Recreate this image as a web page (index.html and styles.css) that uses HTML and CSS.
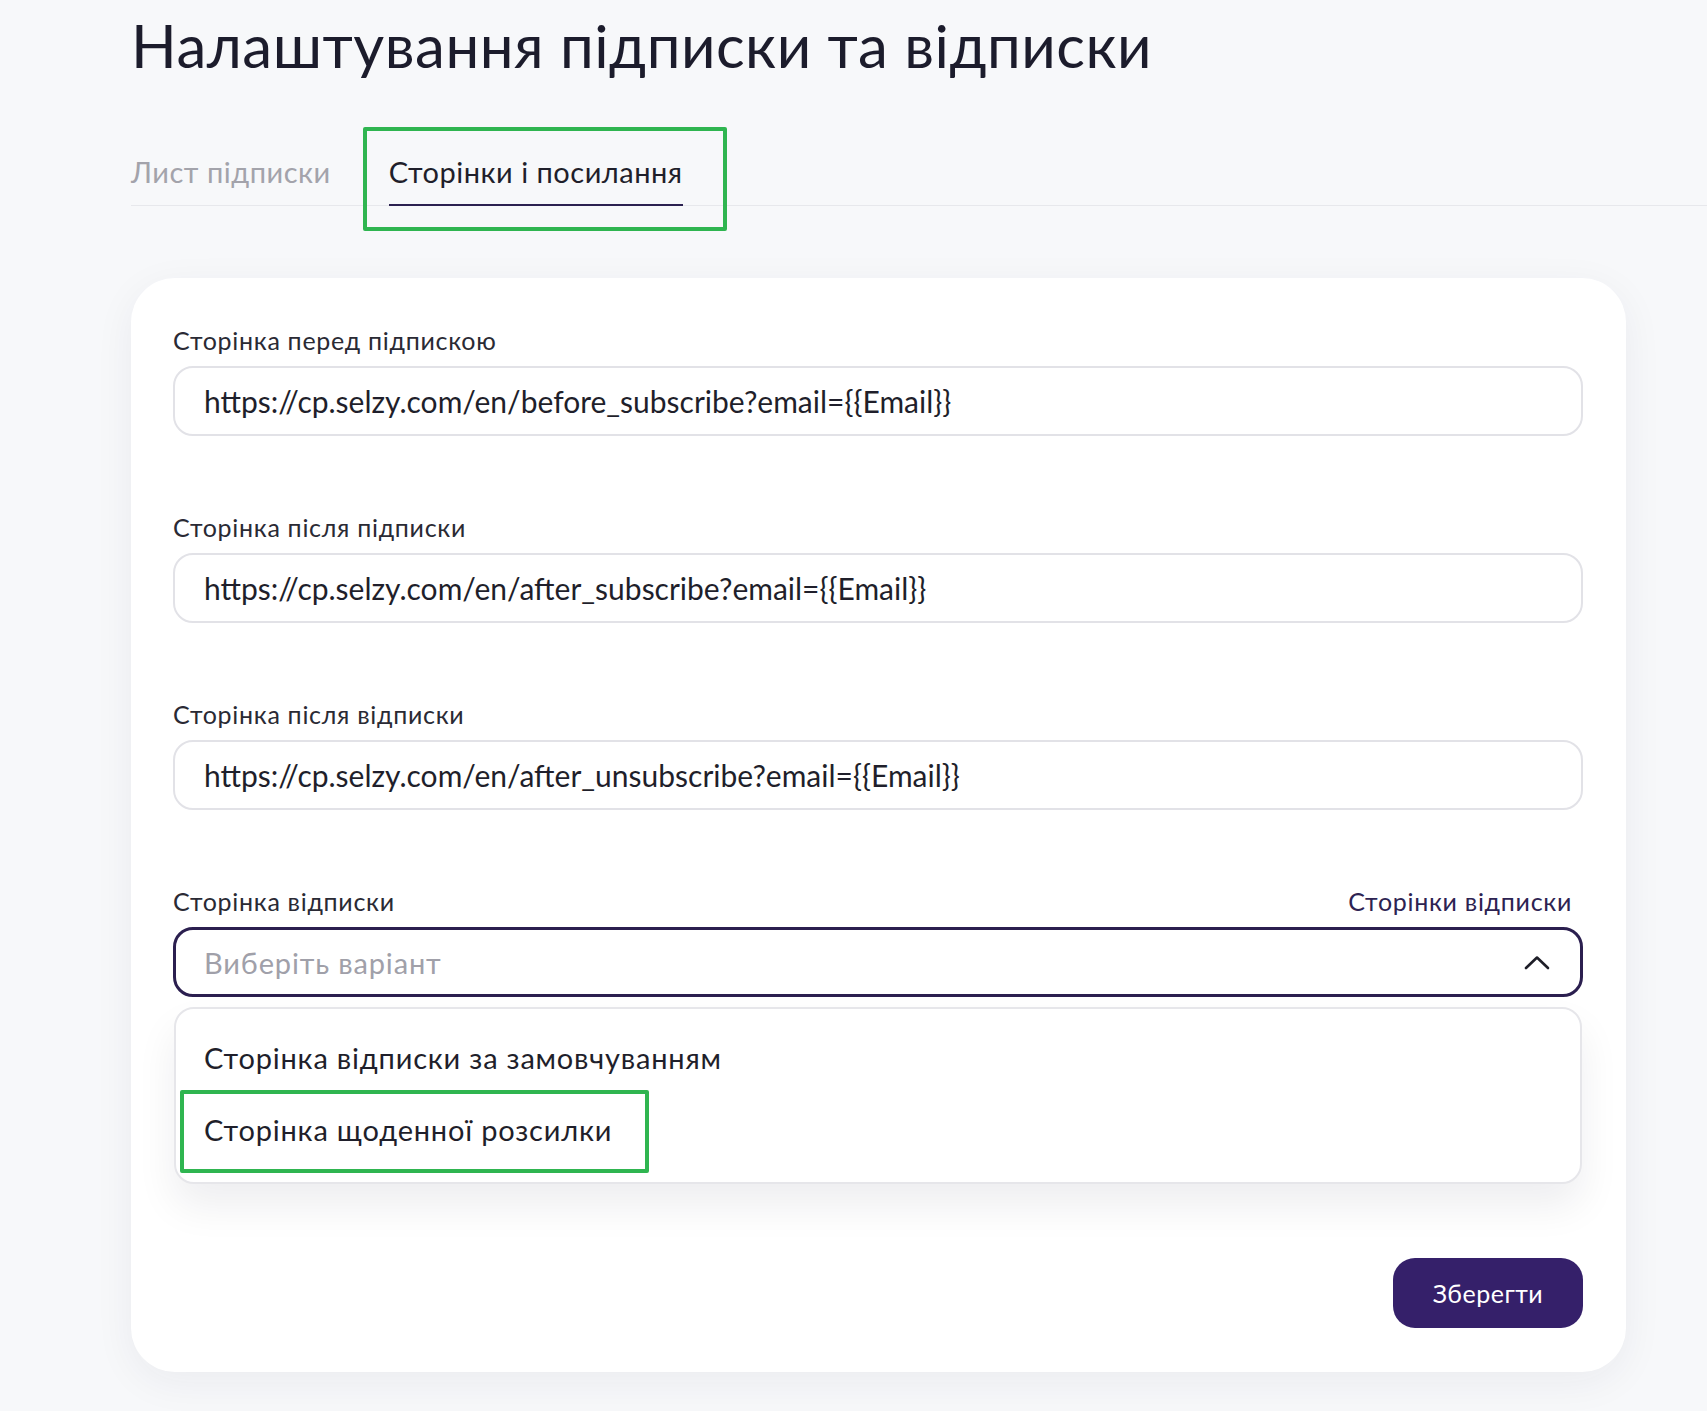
FILE: index.html
```html
<!DOCTYPE html>
<html lang="uk">
<head>
<meta charset="utf-8">
<title>Налаштування підписки та відписки</title>
<link rel="stylesheet" href="styles.css">
</head>
<body>
<div class="page">
  <h1 class="title">Налаштування підписки та відписки</h1>
  <div class="tabs">
    <div class="tab">Лист підписки</div>
    <div class="tab tab-active">Сторінки і посилання<span class="mark mark-tab"></span></div>
  </div>
  <div class="card">
    <div class="fields">
      <div class="field">
        <div class="label-row"><span class="label">Сторінка перед підпискою</span></div>
        <div class="input">https://cp.selzy.com/en/before_subscribe?email={{Email}}</div>
      </div>
      <div class="field">
        <div class="label-row"><span class="label">Сторінка після підписки</span></div>
        <div class="input">https://cp.selzy.com/en/after_subscribe?email={{Email}}</div>
      </div>
      <div class="field">
        <div class="label-row"><span class="label">Сторінка після відписки</span></div>
        <div class="input">https://cp.selzy.com/en/after_unsubscribe?email={{Email}}</div>
      </div>
      <div class="field">
        <div class="label-row">
          <span class="label">Сторінка відписки</span>
          <span class="link">Сторінки відписки</span>
        </div>
        <div class="select-wrap">
          <div class="input select">
            <span class="placeholder">Виберіть варіант</span>
            <svg class="chevron" width="26" height="15" viewBox="0 0 26 15" fill="none"><path d="M2 13L13 2.5L24 13" stroke="#1e1e28" stroke-width="2.6" stroke-linecap="round" stroke-linejoin="round"/></svg>
          </div>
          <div class="dropdown">
            <div class="option">Сторінка відписки за замовчуванням</div>
            <div class="option">Сторінка щоденної розсилки<span class="mark mark-option"></span></div>
          </div>
        </div>
      </div>
    </div>
    <div class="actions">
      <button class="btn" type="button">Зберегти</button>
    </div>
  </div>
</div>
</body>
</html>
```
FILE: styles.css
```css
* { box-sizing: border-box; }
html, body { margin: 0; padding: 0; }
body {
  background: #f7f8fa;
  font-family: Lato, "Noto Sans", sans-serif;
  color: #1f1f2b;
  height: 1411px;
  overflow: hidden;
}
.page {
  padding-left: 131px;
}
.title {
  margin: 0;
  padding-top: 10px;
  font-size: 60px;
  line-height: 70px;
  font-weight: 400;
  color: #1c1c2c;
  letter-spacing: 0.5px;
}
.tabs {
  display: flex;
  gap: 58px;
  margin-top: 75px;
  border-bottom: 1px solid #e7e8ec;
}
.tab {
  position: relative;
  font-size: 29px;
  letter-spacing: 0.5px;
  line-height: 34px;
  padding-bottom: 15px;
  border-bottom: 2px solid transparent;
  margin-bottom: -1px;
  color: #a3a3ab;
}
.tab-active {
  color: #1f1f2b;
  border-bottom-color: #2b2150;
}
.mark {
  position: absolute;
  border: 4px solid #2fb550;
  border-radius: 2px;
  pointer-events: none;
}
.mark-tab {
  left: -26px;
  right: -44px;
  top: -28px;
  bottom: -27px;
}
.card {
  margin-top: 72px;
  margin-right: 81px;
  background: #ffffff;
  border-radius: 44px;
  padding: 48px 43px 44px 42px;
  box-shadow: 0 10px 40px rgba(30, 30, 60, 0.06);
}
.fields {
  display: flex;
  flex-direction: column;
  gap: 77px;
}
.label-row {
  display: flex;
  justify-content: space-between;
  padding-right: 11px;
  margin-bottom: 12px;
  font-size: 25px;
  letter-spacing: 0.7px;
  line-height: 28px;
}
.label { color: #2a2a34; }
.link { color: #2d2352; }
.input {
  height: 70px;
  border: 2px solid #e2e2e7;
  border-radius: 20px;
  padding-left: 29px;
  display: flex;
  align-items: center;
  font-size: 30px;
  color: #1f1f2b;
  background: #fff;
}
.select-wrap { position: relative; }
.select {
  border: 3px solid #2b1f4f;
  justify-content: space-between;
  padding-left: 28px;
  padding-right: 30px;
}
.placeholder {
  color: #a0a0a9;
  font-size: 29px;
  letter-spacing: 0.85px;
}
.chevron { display: block; }
.dropdown {
  position: absolute;
  top: calc(100% + 10px);
  left: 1px;
  right: 1px;
  height: 177px;
  padding-top: 12px;
  background: #fff;
  border: 2px solid #e6e6ea;
  border-radius: 20px;
  box-shadow: 0 22px 40px rgba(20, 20, 40, 0.07);
  z-index: 2;
}
.option {
  position: relative;
  height: 72px;
  display: flex;
  align-items: center;
  padding-left: 28px;
  font-size: 29px;
  letter-spacing: 0.8px;
  color: #1f1f2b;
}
.mark-option {
  left: 4px;
  width: 469px;
  top: -3px;
  bottom: -8px;
}
.actions {
  display: flex;
  justify-content: flex-end;
  margin-top: 261px;
}
.btn {
  width: 190px;
  height: 70px;
  border: none;
  border-radius: 22px;
  background: #35206a;
  color: #ffffff;
  font-family: Lato, "Noto Sans", sans-serif;
  font-size: 25px;
  letter-spacing: 0.5px;
  cursor: pointer;
}
```
